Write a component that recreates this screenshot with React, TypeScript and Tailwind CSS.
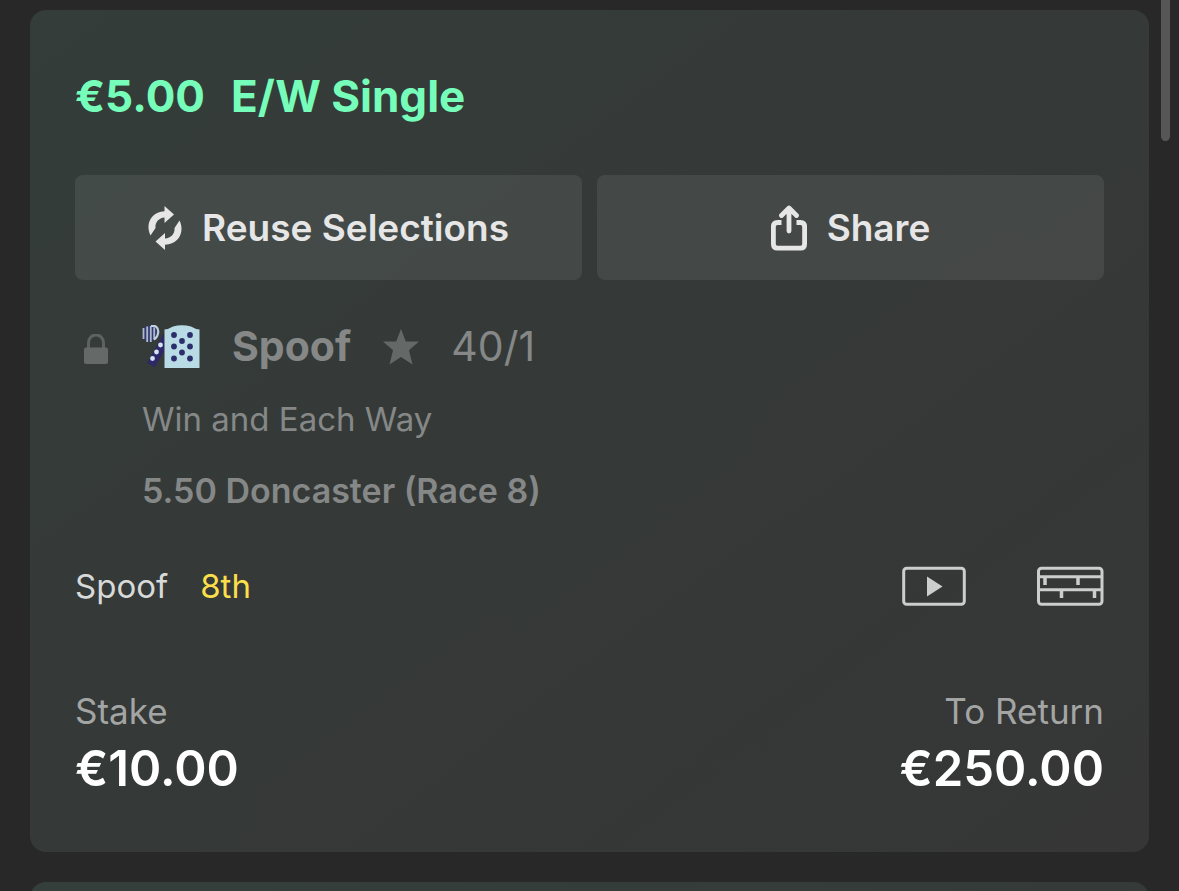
import type { ReactNode } from "react";

type Bet = {
  stakeLabel: string;
  betType: string;
  selection: string;
  odds: string;
  market: string;
  event: string;
  position: string;
  totalStake: string;
  returns: string;
};

const bet: Bet = {
  stakeLabel: "€5.00",
  betType: "E/W Single",
  selection: "Spoof",
  odds: "40/1",
  market: "Win and Each Way",
  event: "5.50 Doncaster (Race 8)",
  position: "8th",
  totalStake: "€10.00",
  returns: "€250.00",
};

function ReuseIcon() {
  return (
    <svg width="34" height="44" viewBox="0 0 34 44" fill="currentColor" aria-hidden="true">
      <path d="M16.500 0 26 8.500 16.500 17V11.500C10.500 12 7 16.500 7.500 22L2.500 29.500C-3 18.500 3 5.500 16.500 5.200Z" />
      <path d="M17 44 7.500 35.500 17 27V32.500C23.500 32 27 27.500 26.500 22L31.500 14.500C37 25.500 31 38.500 17 38.800Z" />
    </svg>
  );
}

function ShareIcon() {
  return (
    <svg
      width="36"
      height="46"
      viewBox="0 0 36 46"
      fill="none"
      stroke="currentColor"
      strokeWidth="4.800"
      strokeLinecap="round"
      strokeLinejoin="round"
      aria-hidden="true"
    >
      <path d="M10.500 17.500H6.500Q2.400 17.500 2.400 21.700V39Q2.400 43.200 6.500 43.200H29.500Q33.600 43.200 33.600 39V21.700Q33.600 17.500 29.500 17.500H25.500" strokeLinecap="butt" />
      <path d="M18 26V3.500M10.500 10.500 18 3 25.500 10.500" />
    </svg>
  );
}

function LockIcon() {
  return (
    <svg width="24" height="30" viewBox="0 0 24 30" aria-hidden="true">
      <path d="M4.500 15V8.500a7.500 7.500 0 0 1 15 0V15" fill="none" stroke="#5e6361" strokeWidth="3" />
      <rect y="13.500" width="24" height="16.500" rx="2" fill="#656a68" />
    </svg>
  );
}

// Jockey silks: hooped cap, spotted sleeve and spotted body
function SilksIcon() {
  const spots = [
    [32, 10],
    [48, 10],
    [40, 16],
    [32, 21.5],
    [48, 21.5],
    [40, 27.5],
    [32, 33.5],
    [48, 33.5],
  ];
  return (
    <svg width="58" height="44" viewBox="0 0 58 44" aria-hidden="true">
      <path d="M1 3Q7-1 12 .8 17 3 16.500 8 15 13 10 16L6 17 1 14Z" fill="#39386f" />
      <path d="M1.500 3V14M5.200 1.500V17M8.800 1V17M12.200 2.500V14.500" stroke="#a9bccd" strokeWidth="1.800" />
      <path d="M9 .9Q16 0 16.300 6.500 16 12 12 14.500" fill="none" stroke="#bdd3df" strokeWidth="2.200" />
      <path d="M22 8V26L13 42 5 38Z" fill="#2d2867" />
      <g fill="#d4e3f4">
        <circle cx="18.500" cy="20" r="2.400" />
        <circle cx="14.500" cy="27" r="2.400" />
        <circle cx="10.500" cy="33.500" r="2.400" />
      </g>
      <path d="M22.500 4.500Q27 4 31 1.500 40-.8 49 1.500 53 4 57.500 4.500V43H22.500Z" fill="#b9dbe5" />
      <g fill="#2c2d6b">
        {spots.map(([x, y]) => (
          <circle key={`${x}-${y}`} cx={x} cy={y} r="2.900" />
        ))}
      </g>
    </svg>
  );
}

function StarIcon() {
  return (
    <svg width="36" height="36" viewBox="0 0 36 36" fill="#646967" aria-hidden="true">
      <path d="M18 0 22.800 12.500H36L26 21.300 29.500 35.500 18 28 6.500 35.500 10 21.300 0 12.500H13.200Z" />
    </svg>
  );
}

function VideoIcon() {
  return (
    <svg width="64" height="40" viewBox="0 0 64 40" aria-hidden="true">
      <rect x="1.700" y="2.200" width="60.600" height="36" rx="3" fill="none" stroke="currentColor" strokeWidth="3" />
      <path d="M25 10.500 40.500 20.500 25 30.500Z" fill="currentColor" />
    </svg>
  );
}

function RaceFenceIcon() {
  return (
    <svg width="67" height="40" viewBox="0 0 67 40" fill="none" stroke="currentColor" strokeWidth="3" aria-hidden="true">
      <rect x="1.500" y="2.200" width="63.500" height="36" rx="3" />
      <path d="M2 10.800H64M2 23.800H64" />
      <path d="M8 10V19M41 10V19M24.500 23V32M57.500 23V32" strokeWidth="3.500" />
    </svg>
  );
}

function ActionButton({ icon, children }: { icon: ReactNode; children: ReactNode }) {
  return (
    <button
      type="button"
      className="flex min-h-[105px] flex-1 items-center justify-center gap-5 rounded-lg bg-white/8 text-[37px]/12 font-semibold text-[#e6e6e6]"
    >
      {icon}
      <span>{children}</span>
    </button>
  );
}

function BetCard({ bet }: { bet: Bet }) {
  return (
    <article className="rounded-2xl bg-linear-to-br from-[#343d3a] via-[#353938] to-[#363636] px-[45px] pt-[62px] pb-[55px]">
      <h2 className="flex gap-[26px] text-[44px]/12 font-bold text-[#75fdb9]">
        <span>{bet.stakeLabel}</span>
        <span>{bet.betType}</span>
      </h2>

      <div className="mt-[55px] flex gap-[15px]">
        <ActionButton icon={<ReuseIcon />}>Reuse Selections</ActionButton>
        <ActionButton icon={<ShareIcon />}>Share</ActionButton>
      </div>

      <div className="mt-[43px] grid grid-cols-[67px_1fr]">
        <div className="flex h-12 items-center pt-1 pl-[9px]">
          <LockIcon />
        </div>
        <div className="text-[#858887]">
          <div className="flex h-12 items-center gap-8 text-[41px]">
            <SilksIcon />
            <h3 className="font-bold">{bet.selection}</h3>
            <StarIcon />
            <span>{bet.odds}</span>
          </div>
          <p className="mt-7 text-[33px]/10">{bet.market}</p>
          <p className="mt-8 text-[34px]/10 font-semibold">{bet.event}</p>
        </div>
      </div>

      <div className="mt-[55px] flex items-center justify-between">
        <p className="flex gap-8 text-[33px]/10 text-[#d8d9d9]">
          <span>{bet.selection}</span>
          <span className="text-[#fadf4b]">{bet.position}</span>
        </p>
        <div className="flex gap-[71px] text-[#cccdcd]">
          <button type="button" aria-label="Watch race">
            <VideoIcon />
          </button>
          <button type="button" aria-label="Race details">
            <RaceFenceIcon />
          </button>
        </div>
      </div>

      <dl className="mt-[85px] flex justify-between">
        <div>
          <dt className="text-[35px]/10 text-[#a3a5a4]">Stake</dt>
          <dd className="mt-[10px] text-[49px]/14 font-semibold text-white">{bet.totalStake}</dd>
        </div>
        <div className="text-right">
          <dt className="text-[35px]/10 text-[#a3a5a4]">To Return</dt>
          <dd className="mt-[10px] text-[49px]/14 font-semibold text-white">{bet.returns}</dd>
        </div>
      </dl>
    </article>
  );
}

export default function App() {
  return (
    <main className="relative h-screen overflow-hidden bg-[#282828] px-[30px] pt-[10px] font-['Inter',sans-serif]">
      <BetCard bet={bet} />
      <div className="mt-[30px] h-40 rounded-2xl bg-linear-to-br from-[#343f3b] to-[#363636]" />
      <div className="absolute top-0 right-[9px] h-[141px] w-[9px] rounded-b-full bg-[#565656]" />
    </main>
  );
}
